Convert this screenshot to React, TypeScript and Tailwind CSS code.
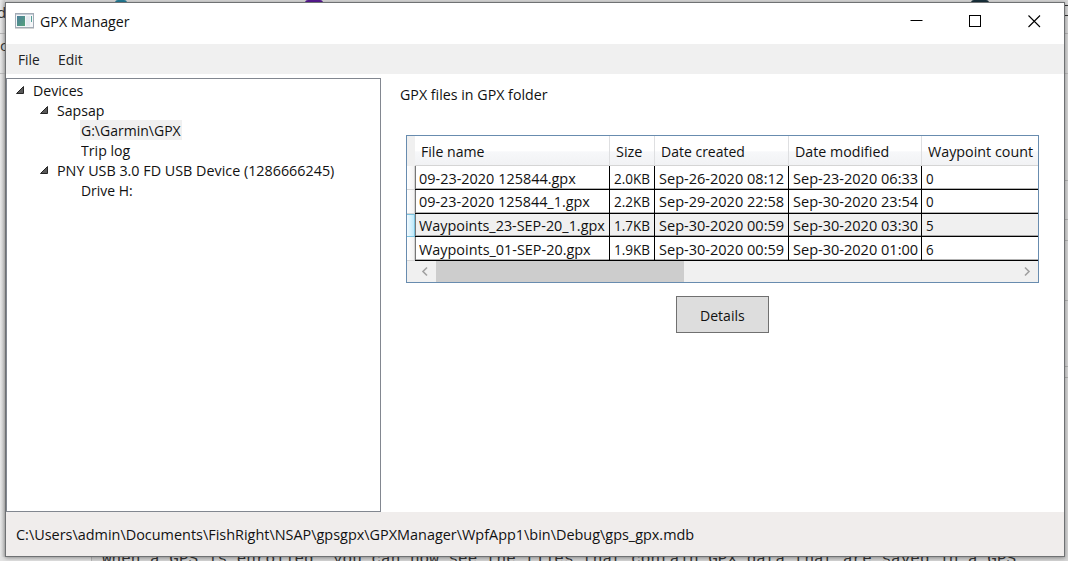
import { useLayoutEffect, useRef, useState } from "react";

type FitProps = { text: string; width: number; className?: string };

// Sets a line of text and condenses it to a given width.
function Fit({ text, width, className = "" }: FitProps) {
  const ref = useRef<HTMLSpanElement>(null);
  const [scale, setScale] = useState(1);
  useLayoutEffect(() => {
    const measure = () => {
      if (ref.current && ref.current.offsetWidth) setScale(width / ref.current.offsetWidth);
    };
    measure();
    document.fonts.ready.then(measure);
  }, [text, width]);
  return (
    <span className={`block whitespace-pre ${className}`} style={{ width }}>
      <span ref={ref} className="inline-block origin-left" style={{ transform: `scaleX(${scale})` }}>
        {text}
      </span>
    </span>
  );
}

function Arrow() {
  return (
    <svg width="8" height="8" viewBox="0 0 8 8" className="shrink-0">
      <path d="M7.5 .5v7h-7z" fill="#595959" stroke="#262626" strokeWidth="1" />
    </svg>
  );
}

function AppIcon() {
  return (
    <svg width="19" height="16" viewBox="0 0 19 16">
      <defs>
        <linearGradient id="pane" x1="0" y1="0" x2="1" y2="1">
          <stop offset="0" stopColor="#4b7f9b" />
          <stop offset="1" stopColor="#55a17b" />
        </linearGradient>
      </defs>
      <rect x=".5" y=".5" width="18" height="14" fill="#f4f6f8" stroke="#a3abb5" />
      <path d="M1 1.5h17" stroke="#c7ced8" />
      <rect x="2" y="3" width="8" height="10" fill="url(#pane)" />
      <rect x="11" y="3" width="4" height="10" fill="#e5eaf0" />
      <path d="M16.5 3v6" stroke="#58a19a" />
      <path d="M0 15.5h19" stroke="#d3d3d3" />
    </svg>
  );
}

const files = [
  { name: "09-23-2020 125844.gpx", nw: 157, size: "2.0KB", created: "Sep-26-2020 08:12", modified: "Sep-23-2020 06:33", count: "0", h: "h-6" },
  { name: "09-23-2020 125844_1.gpx", nw: 171, size: "2.2KB", created: "Sep-29-2020 22:58", modified: "Sep-30-2020 23:54", count: "0", h: "h-6 pb-px" },
  { name: "Waypoints_23-SEP-20_1.gpx", nw: 186, size: "1.7KB", created: "Sep-30-2020 00:59", modified: "Sep-30-2020 03:30", count: "5", h: "h-[23px]", selected: true },
  { name: "Waypoints_01-SEP-20.gpx", nw: 172, size: "1.9KB", created: "Sep-30-2020 00:59", modified: "Sep-30-2020 01:00", count: "6", h: "h-6" },
];

const headers = [
  { label: "File name", w: 63, cls: "w-[195px] pl-1.5" },
  { label: "Size", w: 26, cls: "w-[45px] pl-1.5" },
  { label: "Date created", w: 84, cls: "w-[134px] pl-1.5" },
  { label: "Date modified", w: 94, cls: "w-[133px] pl-1.5" },
  { label: "Waypoint count", w: 105, cls: "w-[116px] pl-1.5" },
];

const cell = "flex items-center border-r border-black pl-1";

function Grid() {
  return (
    <div className="ml-[25px] mt-[31px] h-[148px] w-[633px] border border-[#688caf] bg-white">
      <div className="flex h-[30px]">
        <div className="w-2 bg-[#f0f0f0]" />
        {headers.map((h) => (
          <div
            key={h.label}
            className={`flex shrink-0 items-center border-r border-b border-r-[#dedfe1] border-b-[#d5d5d5] bg-linear-to-b from-white from-50% via-[#f7f8fa] via-55% to-[#f1f2f4] last:border-r-0 ${h.cls}`}
          >
            <Fit text={h.label} width={h.w} />
          </div>
        ))}
      </div>
      {files.map((f) => (
        <div key={f.name} className={`flex ${f.h.startsWith("h-6") ? "h-6" : "h-[23px]"}`}>
          <div
            className={`w-2 shrink-0 border-r border-b ${
              f.selected ? "border-t border-[#7dc3df] bg-linear-to-r from-[#f3fbff] to-[#bde9fb]" : "border-[#d5d5d5] bg-linear-to-r from-white to-[#f3f3f3]"
            }`}
          />
          <div className={`flex flex-1 border-b border-black shadow-[inset_0_-1px_0_#0000004d] ${f.selected ? "bg-[#f0f0f0]" : ""}`}>
            <div className={`${cell} w-[195px] border-l border-l-[#777] pl-[3px]`}><Fit text={f.name} width={f.nw} className={f.h.includes("pb") ? "pb-0.5" : ""} /></div>
            <div className={`${cell} w-[45px]`}><Fit text={f.size} width={36} className={f.h.includes("pb") ? "pb-0.5" : ""} /></div>
            <div className={`${cell} w-[134px]`}><Fit text={f.created} width={125} className={f.h.includes("pb") ? "pb-0.5" : ""} /></div>
            <div className={`${cell} w-[133px]`}><Fit text={f.modified} width={125} className={f.h.includes("pb") ? "pb-0.5" : ""} /></div>
            <div className="flex items-center pl-1"><Fit text={f.count} width={8} className={f.h.includes("pb") ? "pb-0.5" : ""} /></div>
          </div>
        </div>
      ))}
      <div className="flex h-[21px] items-center bg-[#f0f0f0]">
        <div className="flex w-[29px] justify-center pl-1.5">
          <svg width="8" height="11" viewBox="0 0 8 11"><path d="M6 1.5 2 5.5l4 4" fill="none" stroke="#a0a0a0" strokeWidth="1.6" /></svg>
        </div>
        <div className="h-full w-[248px] bg-[#cdcdcd]" />
        <div className="flex flex-1 justify-end pr-[7px]">
          <svg width="8" height="11" viewBox="0 0 8 11"><path d="m2 1.5 4 4-4 4" fill="none" stroke="#a0a0a0" strokeWidth="1.6" /></svg>
        </div>
      </div>
    </div>
  );
}

function Backdrop() {
  return (
    <div className="absolute inset-0 overflow-hidden bg-[#d6d6d6]">
      <div className="absolute left-0 top-0 h-full w-[5px] bg-linear-to-r from-[#e9e9e9] to-[#c9c9c9]" />
      <div className="absolute -left-[3px] top-0 text-[15px] leading-6 text-[#333]">do</div>
      <div className="absolute left-0 top-[33px] text-[15px] leading-6 text-[#333]">c</div>
      <div className="absolute left-0 top-[33px] h-px w-full bg-[#b5b5b5]" />
      <div className="absolute left-0 top-[73px] h-px w-full bg-[#bcbcbc]" />
      <div className="absolute left-[115px] top-0 h-[3px] w-3 rounded-t-full bg-[#247b95]" />
      <div className="absolute left-[305px] top-0 h-[3px] w-[18px] rounded-t-full bg-[#571a92]" />
      <div className="absolute left-[971px] top-0 h-[3px] w-[18px] rounded-t-full bg-[#19303b]" />
      <div className="absolute left-[1065px] top-[5px] h-px w-[3px] bg-[#333]" />
      <div className="absolute left-[1065px] top-[15px] h-px w-[3px] bg-[#333]" />
      <div className="absolute left-[1065px] top-[180px] h-px w-[3px] bg-[#b2b2b2]" />
      <div className="absolute left-[1065px] top-[219px] h-px w-[3px] bg-[#b2b2b2]" />
      <div className="absolute left-[1065px] top-[240px] h-px w-[3px] bg-[#b2b2b2]" />
      <div className="absolute left-[1065px] top-[300px] h-px w-[3px] bg-[#b2b2b2]" />
      <div className="absolute left-[1065px] top-[366px] h-px w-[3px] bg-[#b2b2b2]" />
      <div className="absolute left-[1065px] top-[377px] h-px w-[3px] bg-[#b2b2b2]" />
      <div className="absolute left-0 top-[557px] h-1 w-[91px] bg-[#e2e2e2]" />
      <div className="absolute left-[91px] top-[557px] h-1 w-px bg-[#b8b8b8]" />
      <div className="absolute left-[102px] top-[551px] font-['Liberation_Mono',monospace] text-[15px] leading-[18px] text-[#333]">
        <Fit text="When a GPS is enrolled, you can now see the files that contain GPX data that are saved in a GPS" width={914} />
      </div>
    </div>
  );
}

export default function App() {
  return (
    <div className="relative h-[561px] w-[1068px] overflow-hidden font-['Open_Sans','Noto_Sans',sans-serif] text-[15px] leading-5 text-[#111]">
      <Backdrop />
      <div className="relative ml-[5px] h-full w-[1060px] pt-0.5">
        <div className="flex h-[555px] flex-col border border-[#6f7173] bg-white shadow-[0_1px_4px_#00000060]">
          <header className="flex h-[41px] shrink-0 items-start pl-[9px]">
            <div className="pt-2.5"><AppIcon /></div>
            <div className="pl-1.5 pt-2"><Fit text="GPX Manager" width={90} /></div>
            <div className="ml-auto flex gap-[46px] pr-[23px] pt-3 text-black">
              <svg width="13" height="13" viewBox="0 0 13 13" fill="none" stroke="currentColor"><path d="M.5 5.5h12" /></svg>
              <svg width="13" height="13" viewBox="0 0 13 13" fill="none" stroke="currentColor"><rect x=".5" y=".5" width="11" height="11" /></svg>
              <svg width="13" height="13" viewBox="0 0 13 13" fill="none" stroke="currentColor"><path d="m.5.5 11.5 11.5m0-11.5-11.5 11.5" strokeWidth="1.1" /></svg>
            </div>
          </header>
          <nav className="flex h-[30px] shrink-0 items-center gap-[18px] bg-[#f0f0f0] pl-3 text-[#222]">
            <Fit text="File" width={22} />
            <Fit text="Edit" width={25} />
          </nav>
          <main className="flex h-[438px] shrink-0 pt-1">
            <aside className="w-[375px] border border-[#828790] pl-[9px] pt-px">
              <div className="flex h-5 items-center gap-[9px]"><Arrow /><Fit text="Devices" width={50} /></div>
              <div className="flex h-5 items-center gap-[9px] pl-6"><Arrow /><Fit text="Sapsap" width={47} /></div>
              <div className="flex h-5 pl-16"><div className="bg-[#f0f0f0] px-px"><Fit text="G:\Garmin\GPX" width={100} /></div></div>
              <div className="flex h-5 pl-[65px]"><Fit text="Trip log" width={49} /></div>
              <div className="flex h-5 items-center gap-[9px] pl-6"><Arrow /><Fit text="PNY USB 3.0 FD USB Device (1286666245)" width={277} /></div>
              <div className="flex h-5 pl-[65px]"><Fit text="Drive H:" width={52} /></div>
            </aside>
            <section className="flex-1 pt-1.5">
              <div className="pl-[19px]"><Fit text="GPX files in GPX folder" width={148} /></div>
              <Grid />
              <button className="ml-[295px] mt-[13px] flex h-[37px] w-[93px] items-center justify-center border border-[#707070] bg-[#dddddd]">
                <Fit text="Details" width={45} className="text-left" />
              </button>
            </section>
          </main>
          <footer className="flex flex-1 items-center bg-[#f0edec] pl-2.5">
            <Fit text="C:\Users\admin\Documents\FishRight\NSAP\gpsgpx\GPXManager\WpfApp1\bin\Debug\gps_gpx.mdb" width={678} />
          </footer>
        </div>
      </div>
    </div>
  );
}
